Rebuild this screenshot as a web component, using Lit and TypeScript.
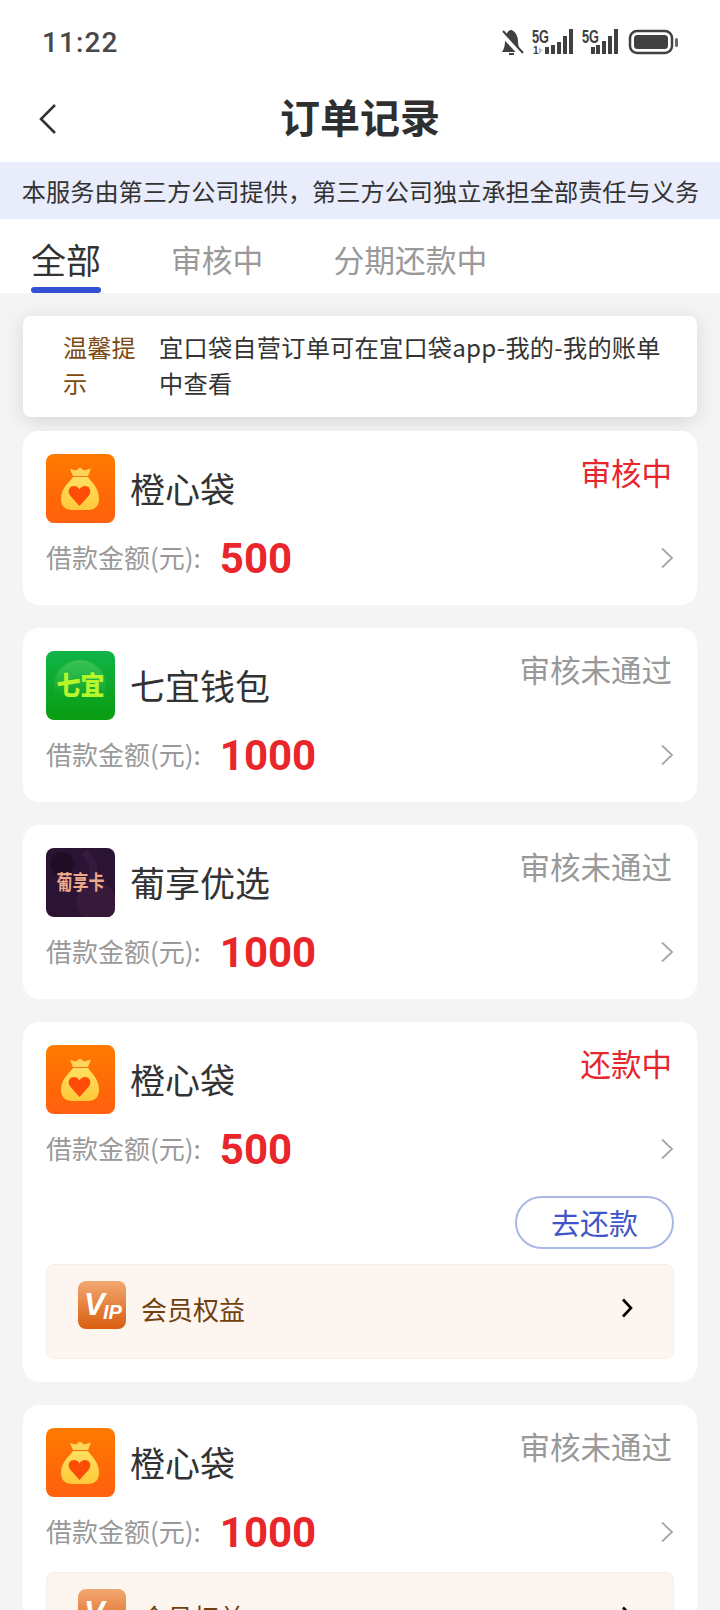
import { LitElement, html, css, svg } from 'lit';
import { customElement } from 'lit/decorators.js';

type Brand = 'bag' | 'qiyi' | 'putao';

interface Order {
  brand: Brand;
  name: string;
  amount: string;
  status: string;
  active: boolean;
  repay?: boolean;
  perks?: boolean;
}

const orders: Order[] = [
  { brand: 'bag', name: '橙心袋', amount: '500', status: '审核中', active: true },
  { brand: 'qiyi', name: '七宜钱包', amount: '1000', status: '审核未通过', active: false },
  { brand: 'putao', name: '葡享优选', amount: '1000', status: '审核未通过', active: false },
  { brand: 'bag', name: '橙心袋', amount: '500', status: '还款中', active: true, repay: true, perks: true },
  { brand: 'bag', name: '橙心袋', amount: '1000', status: '审核未通过', active: false, perks: true },
];

const bagLogo = svg`
  <defs>
    <linearGradient id="bagBg" x1="0" y1="0" x2="0" y2="1">
      <stop offset="0" stop-color="#ff7a00" />
      <stop offset="1" stop-color="#ff5f0e" />
    </linearGradient>
    <linearGradient id="bagFill" x1="0" y1="0" x2="0" y2="1">
      <stop offset="0" stop-color="#ffe060" />
      <stop offset="1" stop-color="#ffc93a" />
    </linearGradient>
  </defs>
  <rect width="69" height="69" rx="8" fill="url(#bagBg)" />
  <path d="M24 15l6 1.500 4-3 4 3 7-2-3 7.500h-15z" fill="#ffd65a" />
  <path d="M27 23h15c2 4 11 10 11 22 0 8-5 11-12 11H27c-7 0-12-3-12-11 0-12 10-18 12-22z" fill="url(#bagFill)" />
  <path d="M33.500 52L24.500 42c-4-5-1-10 3.500-10 2.500 0 4.500 1.500 5.500 3.500 1-2 3-3.500 5.500-3.500 4.500 0 7.500 5 3.500 10z" fill="#ff4d08" />
`;

const qiyiLogo = svg`
  <defs>
    <linearGradient id="qiyiBg" x1="0" y1="0" x2="0" y2="1">
      <stop offset="0" stop-color="#10b548" />
      <stop offset="1" stop-color="#0a9c10" />
    </linearGradient>
    <linearGradient id="qiyiGlow" x1="0" y1="0" x2="0" y2="1">
      <stop offset="0" stop-color="#5fcf6a" stop-opacity=".55" />
      <stop offset=".7" stop-color="#5fcf6a" stop-opacity="0" />
    </linearGradient>
  </defs>
  <rect width="69" height="69" rx="8" fill="url(#qiyiBg)" />
  <circle cx="34" cy="35" r="26" fill="url(#qiyiGlow)" />
  <g transform="translate(34.500 0) scale(1 1.100)">
    <text y="40" text-anchor="middle" font-size="24" font-weight="900" fill="#b6f62c"
      font-family="'Noto Sans CJK SC', sans-serif">七宜</text>
  </g>
`;

const putaoLogo = svg`
  <rect width="69" height="69" rx="8" fill="#2a1333" />
  <circle cx="16" cy="16" r="12" fill="#1f0d26" />
  <circle cx="50" cy="54" r="20" fill="#37193a" />
  <path d="M38 4c12 10 12 24 4 36" fill="none" stroke="#341a3e" stroke-width="8" />
  <g transform="translate(34.500 0) scale(1 1.300)">
    <text y="32" text-anchor="middle" font-size="16" font-weight="700" fill="#eaa988"
      font-family="'Noto Sans CJK SC', sans-serif">葡享卡</text>
  </g>
`;

const logos: Record<Brand, unknown> = { bag: bagLogo, qiyi: qiyiLogo, putao: putaoLogo };

@customElement('status-bar')
export class StatusBar extends LitElement {
  static styles = css`
    :host {
      display: flex;
      align-items: center;
      justify-content: space-between;
      height: 84px;
      padding: 0 42px;
      box-sizing: border-box;
      color: #484848;
    }

    .time {
      font-family: Roboto, sans-serif;
      font-size: 28px;
      font-weight: 500;
      letter-spacing: 1.100px;
    }

    svg {
      display: block;
    }
  `;

  render() {
    return html`
      <span class="time">11:22</span>
      <svg width="178" height="28" viewBox="0 0 178 28">
        <!-- muted bell -->
        <path d="M2 24c2-3 3-6 3-11 0-6 3-11 6-11s7 5 7 11c0 5 1 8 3 11z" fill="#404040" />
        <rect x="9" y="25" width="5" height="2" fill="#404040" />
        <path d="M1 5l20 21" stroke="#fff" stroke-width="5" />
        <path d="M3 3l20 22" stroke="#404040" stroke-width="2" />
        <!-- first SIM -->
        <text x="32" y="15" font-size="18" font-weight="700" fill="#404040" textLength="17" lengthAdjust="spacingAndGlyphs"
          font-family="'Liberation Sans', sans-serif">5G</text>
        <text x="33" y="26" font-size="10" font-weight="700" fill="#404040" font-family="'Liberation Sans', sans-serif">1</text>
        <path d="M39 19l3.500 3.500-3.500 3.500z" fill="#bbb" />
        <g fill="#404040">
          <rect x="45" y="19" width="4" height="7" />
          <rect x="51" y="17" width="4" height="9" />
          <rect x="57" y="14" width="4" height="12" />
          <rect x="63" y="8" width="4" height="18" />
          <rect x="69" y="1" width="4" height="25" />
        </g>
        <!-- second SIM -->
        <text x="82" y="15" font-size="18" font-weight="700" fill="#404040" textLength="17" lengthAdjust="spacingAndGlyphs"
          font-family="'Liberation Sans', sans-serif">5G</text>
        <g fill="#404040">
          <rect x="91" y="19" width="4" height="7" />
          <rect x="96" y="17" width="4" height="9" />
          <rect x="102" y="13" width="4" height="13" />
          <rect x="108" y="8" width="4" height="18" />
          <rect x="114" y="1" width="4" height="25" />
        </g>
        <!-- battery -->
        <rect x="130" y="3" width="42" height="22" rx="7" fill="none" stroke="#404040" stroke-width="2.500" />
        <rect x="134" y="7" width="34" height="14" rx="3.500" fill="#404040" />
        <rect x="175" y="10" width="3" height="9" rx="1.500" fill="#666" />
      </svg>
    `;
  }
}

@customElement('order-card')
export class OrderCard extends LitElement {
  static properties = { order: { attribute: false } };
  declare order: Order;

  static styles = css`
    :host {
      display: block;
      background: #fff;
      border-radius: 16px;
      padding: 23px 23px 22px;
    }

    .head {
      display: flex;
      align-items: flex-start;
    }

    .logo {
      width: 69px;
      height: 69px;
      flex: none;
      display: block;
    }

    .name {
      margin-left: 15px;
      font-size: 35px;
      line-height: 67px;
      color: #333;
    }

    .status {
      margin-left: auto;
      margin-right: 2px;
      font-size: 30.500px;
      line-height: 36px;
      color: #999;
    }

    .status.active {
      color: #e6262c;
    }

    .amount {
      display: flex;
      align-items: center;
      height: 50px;
      margin-top: 10px;
    }

    .label {
      margin-top: -4px;
      font-size: 26px;
      color: #999;
    }

    .value {
      margin-left: 19px;
      font-family: Roboto, sans-serif;
      font-size: 42px;
      font-weight: 700;
      color: #e8262c;
    }

    .arrow {
      margin-left: auto;
    }

    .repay {
      display: flex;
      justify-content: flex-end;
      margin-top: 22px;
    }

    .repay span {
      width: 159px;
      height: 53px;
      box-sizing: border-box;
      border: 2px solid #aab6e6;
      border-radius: 27px;
      font-size: 29px;
      line-height: 49px;
      text-align: center;
      color: #3f55c9;
    }

    .perks {
      display: flex;
      align-items: center;
      height: 95px;
      margin: 15px 0 1px;
      padding: 0 40px 0 31px;
      box-sizing: border-box;
      background: #fdf6f0;
      border: 1px solid #f8eee5;
      border-radius: 8px;
    }

    .perks .vip {
      margin-top: -14px;
    }

    .perks .title {
      margin-top: -6px;
      margin-left: 15px;
      font-size: 26px;
      color: #70400f;
    }

    .perks .go {
      margin-left: auto;
      margin-top: -8px;
    }

    svg {
      display: block;
    }
  `;

  private renderPerks() {
    return html`
      <div class="perks">
        <svg class="vip" width="48" height="48" viewBox="0 0 48 48">
          <defs>
            <linearGradient id="vipBg" x1="0" y1="0" x2="0" y2="1">
              <stop offset="0" stop-color="#f2a873" />
              <stop offset="1" stop-color="#d95d0e" />
            </linearGradient>
          </defs>
          <rect width="48" height="48" rx="8" fill="url(#vipBg)" />
          <text x="6" y="34" font-size="31" font-weight="700" font-style="italic" fill="#fff"
            font-family="'Liberation Sans', sans-serif">V</text>
          <text x="25" y="38" font-size="20" font-weight="700" font-style="italic" fill="#fff"
            font-family="'Liberation Sans', sans-serif">IP</text>
        </svg>
        <span class="title">会员权益</span>
        <svg class="go" width="12" height="20" viewBox="0 0 12 20">
          <path d="M2 1.500l8 8.500-8 8.500" fill="none" stroke="#000" stroke-width="2.600" />
        </svg>
      </div>
    `;
  }

  render() {
    const o = this.order;
    return html`
      <div class="head">
        <svg class="logo" viewBox="0 0 69 69">${logos[o.brand]}</svg>
        <span class="name">${o.name}</span>
        <span class="status ${o.active ? 'active' : ''}">${o.status}</span>
      </div>
      <div class="amount">
        <span class="label">借款金额(元):</span>
        <span class="value">${o.amount}</span>
        <svg class="arrow" width="14" height="22" viewBox="0 0 14 22">
          <path d="M2 1.500l10 9.500-10 9.500" fill="none" stroke="#a6a6a6" stroke-width="1.800" />
        </svg>
      </div>
      ${o.repay ? html`<div class="repay"><span>去还款</span></div>` : ''}
      ${o.perks ? this.renderPerks() : ''}
    `;
  }
}

@customElement('app-root')
export class AppRoot extends LitElement {
  static styles = css`
    :host {
      display: block;
      width: 720px;
      height: 1610px;
      overflow: hidden;
      background: #f4f4f4;
      font-family: 'Noto Sans CJK SC', 'Noto Sans', sans-serif;
    }

    .top {
      background: #fff;
    }

    .nav {
      display: flex;
      align-items: center;
      justify-content: center;
      position: relative;
      height: 78px;
      padding-bottom: 14px;
      box-sizing: border-box;
    }

    .nav h1 {
      margin: 0;
      font-size: 40px;
      font-weight: 700;
      color: #2f2f2f;
    }

    .back {
      position: absolute;
      left: 38px;
      top: 19px;
    }

    .notice {
      height: 57px;
      padding-left: 1px;
      background: #e9edfb;
      font-size: 24.200px;
      line-height: 57px;
      text-align: center;
      white-space: nowrap;
      color: #333;
    }

    .tabs {
      display: flex;
      align-items: flex-start;
      gap: 70px;
      height: 74px;
      padding-left: 31px;
      box-sizing: border-box;
    }

    .tab {
      font-size: 30.800px;
      line-height: 80px;
      height: 74px;
      color: #999;
    }

    .tab.on {
      position: relative;
      font-size: 35px;
      color: #333;
    }

    .tab.on::after {
      content: '';
      position: absolute;
      left: 0;
      right: 0;
      bottom: 0;
      height: 6px;
      border-radius: 3px;
      background: #3350d2;
    }

    .list {
      display: flex;
      flex-direction: column;
      gap: 23px;
      padding: 23px 23px 0;
    }

    .tip {
      display: flex;
      margin-bottom: -9px;
      padding: 13px 28px 16px 40px;
      background: #fff;
      border-radius: 8px;
      box-shadow: 0 4px 20px rgba(0, 0, 0, 0.12);
      font-size: 24.200px;
      line-height: 36px;
      color: #333;
    }

    .tip b {
      flex: none;
      width: 74px;
      margin-right: 22px;
      font-weight: 400;
      color: #7c4a12;
    }

    .tip span {
      letter-spacing: 0.250px;
    }
  `;

  render() {
    return html`
      <div class="top">
        <status-bar></status-bar>
        <div class="nav">
          <svg class="back" width="20" height="32" viewBox="0 0 20 32">
            <path d="M17 2L3 16l14 14" fill="none" stroke="#333" stroke-width="2.600" />
          </svg>
          <h1>订单记录</h1>
        </div>
        <div class="notice">本服务由第三方公司提供，第三方公司独立承担全部责任与义务</div>
        <div class="tabs">
          <span class="tab on">全部</span>
          <span class="tab">审核中</span>
          <span class="tab">分期还款中</span>
        </div>
      </div>
      <div class="list">
        <div class="tip">
          <b>温馨提示</b>
          <span>宜口袋自营订单可在宜口袋app-我的-我的账单中查看</span>
        </div>
        ${orders.map((o) => html`<order-card .order=${o}></order-card>`)}
      </div>
    `;
  }
}
